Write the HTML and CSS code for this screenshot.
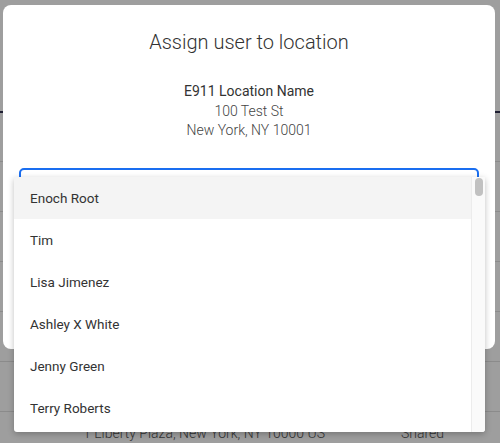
FILE: index.html
```html
<!DOCTYPE html>
<html>
<head>
<meta charset="utf-8" />
<title>Assign user to location</title>
<link rel="stylesheet" href="styles.css">
</head>
<body>
<div class="page">
	<div class="page-header"></div>
	<div class="table">
		<div class="row"></div>
		<div class="row"></div>
		<div class="row"></div>
		<div class="row"></div>
		<div class="row"></div>
		<div class="row">
			<span class="cell-address">1 Liberty Plaza, New York, NY 10000 US</span>
			<span class="cell-type">Shared</span>
		</div>
	</div>
</div>

<div class="overlay"></div>

<div class="modal">
	<h2 class="modal-title">Assign user to location</h2>
	<div class="location">
		<p class="location-name">E911 Location Name</p>
		<p>100 Test St</p>
		<p>New York, NY 10001</p>
	</div>
	<div class="user-select"></div>
</div>

<div class="dropdown">
	<ul class="dropdown-list">
		<li class="active">Enoch Root</li>
		<li>Tim</li>
		<li>Lisa Jimenez</li>
		<li>Ashley X White</li>
		<li>Jenny Green</li>
		<li>Terry Roberts</li>
		<li>Mark Stevens</li>
	</ul>
	<div class="scroll-track">
		<div class="scroll-thumb"></div>
	</div>
</div>
</body>
</html>
```

FILE: styles.css
```css
html, body{
	margin: 0;
	padding: 0;
}
body{
	width: 500px;
	height: 443px;
	overflow: hidden;
	position: relative;
	font-family: Roboto, "Liberation Sans", sans-serif;
	color: #333;
	background: #fff;
}

/* page behind the dialog */
.page-header{
	height: 111px;
	border-bottom: 2px solid #323252;
}
.table{
	padding-top: 48px;
}
.row{
	height: 49px;
	border-top: 1px solid #e0e0e0;
	display: flex;
	align-items: center;
	font-size: 14px;
	font-weight: 300;
	color: #555;
}
.row:last-child{
	height: 42px;
}
.cell-address{
	margin-left: 83px;
	width: 318px;
}

.overlay{
	position: absolute;
	inset: 0;
	background: rgba(0,0,0,0.38);
}

/* dialog */
.modal{
	position: absolute;
	left: 3px;
	top: 5px;
	width: 492px;
	height: 344px;
	box-sizing: border-box;
	padding: 0 16px;
	background: #fff;
	border-radius: 8px;
	overflow: hidden;
}
.modal-title{
	margin: 25px 0 0;
	font-size: 20px;
	font-weight: 300;
	line-height: 24px;
	text-align: center;
	color: #333;
}
.location{
	margin-top: 28px;
	text-align: center;
	font-size: 14px;
	font-weight: 300;
	line-height: 19.5px;
	color: #444;
}
.location p{
	margin: 0;
}
.location .location-name{
	font-weight: 400;
	color: #333;
}
.user-select{
	margin-top: 27px;
	height: 44px;
	border: 2px solid #1a6ef0;
	border-radius: 5px;
}

/* open menu of the select */
.dropdown{
	position: absolute;
	left: 14px;
	top: 177px;
	width: 471px;
	height: 255px;
	display: flex;
	background: #fff;
	border-radius: 0 0 3px 3px;
	box-shadow: 0 2px 6px rgba(0,0,0,0.25);
	overflow: hidden;
}
.dropdown-list{
	flex: 1;
	list-style: none;
	margin: 0;
	padding: 0;
}
.dropdown-list li{
	height: 42px;
	line-height: 42px;
	padding-left: 16px;
	font-size: 13.5px;
	color: #333;
}
.dropdown-list li.active{
	background: #f4f4f4;
}
.scroll-track{
	width: 13px;
	border-left: 1px solid #ececec;
	background: #fafafa;
	padding-top: 1px;
}
.scroll-thumb{
	width: 8px;
	height: 18px;
	margin-left: 3px;
	border-radius: 4px;
	background: #c1c1c1;
}
```
